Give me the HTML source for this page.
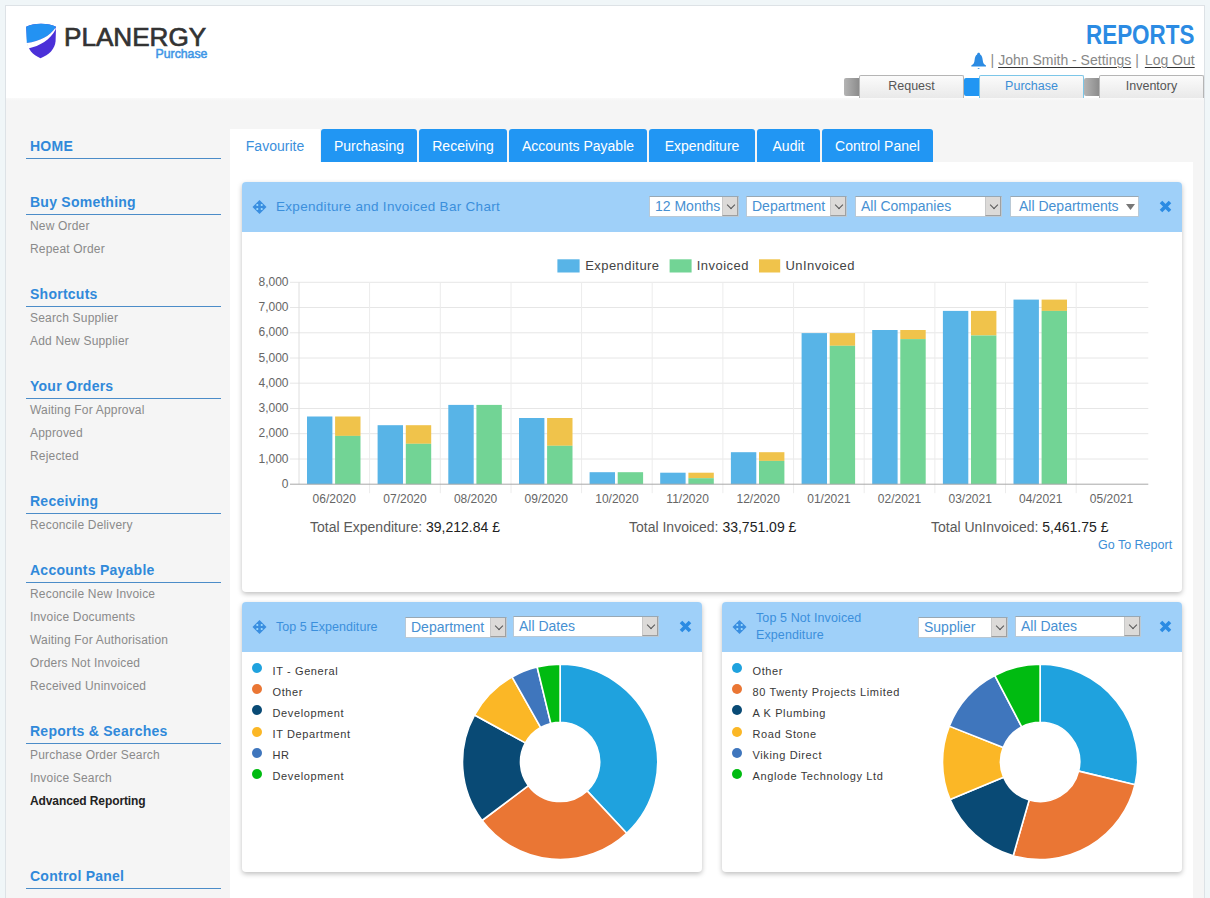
<!DOCTYPE html>
<html><head><meta charset="utf-8">
<style>
*{margin:0;padding:0;box-sizing:border-box}
html,body{width:1210px;height:898px;overflow:hidden;background:#f0f6f8;font-family:"Liberation Sans",sans-serif}
.abs{position:absolute}
#frame{position:absolute;left:5px;top:5px;width:1200px;height:900px;border:1px solid #dde2e6;background:#f5f5f5}
#hdr{position:absolute;left:6px;top:6px;width:1198px;height:93px;background:#fff;border-bottom:1px solid #e2e2e2}
#hdr:after{content:"";position:absolute;left:0;right:0;top:92px;height:3px;background:linear-gradient(#f9f9f9,#f5f5f5)}
.side-h{position:absolute;left:26px;width:195px;border-bottom:1px solid #4b8cc8;color:#3089da;font-weight:bold;font-size:14px;letter-spacing:0.25px;padding-left:4px;padding-top:0.5px}
.side-i{position:absolute;left:30px;font-size:12px;color:#8a8a8a;letter-spacing:0.18px;white-space:nowrap}
#panel{position:absolute;left:230px;top:162px;width:963px;height:740px;background:#fff}
.tab{position:absolute;top:129px;height:33px;background:#2196f3;color:#fff;border-radius:3px 3px 0 0;font-size:14px;text-align:center;line-height:34px;white-space:nowrap}
.wid{position:absolute;background:#fff;border-radius:4px;box-shadow:0 2px 5px rgba(0,0,0,0.25)}
.wh{position:absolute;left:0;top:0;right:0;height:50px;background:#9fd0f9;border-radius:4px 4px 0 0}
.wt{position:absolute;color:#3b8fdc;font-size:13.5px;letter-spacing:0.3px;white-space:nowrap}
.sel{position:absolute;height:21px;background:#fff;border:1px solid #b9c9d6;border-top-color:#98a8b4;color:#4690d2;font-size:14px;line-height:19px;padding-left:5px;white-space:nowrap;overflow:hidden}
.sel .arr{position:absolute;right:0;top:0;width:16px;height:19px;background:#dcdad8;border-left:1px solid #c8c8c8;border-right:1px solid #a0a0a0;border-bottom:1px solid #a0a0a0}
.sel .arr:after{content:"";position:absolute;left:4.5px;top:5px;width:5px;height:5px;border-right:1.5px solid #555;border-bottom:1.5px solid #555;transform:rotate(45deg)}
.tot{position:absolute;font-size:14px;color:#5a5a5a;white-space:nowrap}
.tot b{font-weight:normal;color:#222}
.lgi{position:absolute;left:0;font-size:11px;color:#383838;letter-spacing:0.62px;white-space:nowrap}
.dot{position:absolute;width:10px;height:10px;border-radius:50%}
.hbtn{position:absolute;top:75px;width:105px;height:23px;border:1px solid #b5b5b5;border-bottom:none;border-radius:2px 2px 0 0;background:linear-gradient(#fbfbfb,#e9e9e9);color:#555;font-size:12.5px;text-align:center;line-height:21px}
.mark{position:absolute;top:78px;width:15px;height:18px;border-radius:2px 0 0 2px}
svg text{font-family:"Liberation Sans",sans-serif}
.ax{font-size:12px;fill:#666}
.lg{font-size:13px;fill:#444;letter-spacing:0.45px}
</style></head><body>
<div id="frame"></div>
<div id="hdr"></div>

<!-- logo -->
<svg class="abs" style="left:24px;top:21px" width="36" height="40" viewBox="0 0 36 40">
  <path d="M2.2,5.8 C9,1.6 25,1.6 32,5.8 L31.6,20 C31,28 25,34 16.5,37.2 C8.5,34 3.5,28 3,20 Z" fill="#4b30d8"/>
  <path d="M2.2,5.8 C9,1.6 25,1.6 32,5.8 L31.6,6.6 C26,15 16,20.5 2.8,22 Z" fill="#2392f2"/>
  <path d="M2.8,22 C16,20.5 26,15 31.6,6.6 L31.6,8.6 C26,19 16,25 4.3,27.6 C3.6,26 3.1,24 2.9,22 Z" fill="#ffffff"/>
</svg>
<div class="abs" style="left:64px;top:22px;font-size:26.5px;color:#333;line-height:30px;transform:scaleX(0.985);transform-origin:left top;-webkit-text-stroke:0.7px #333;color:#333">PLANERGY</div>
<div class="abs" style="left:155.5px;top:47px;font-size:12.3px;color:#3d96e6;line-height:14px;-webkit-text-stroke:0.5px #3d96e6">Purchase</div>

<!-- right header -->
<div class="abs" style="left:1086px;top:19px;font-size:27px;font-weight:bold;color:#2b8be3;line-height:32px;transform:scaleX(0.83);transform-origin:left top">REPORTS</div>
<svg class="abs" style="left:971px;top:52px" width="16" height="18" viewBox="0 0 16 18">
 <path d="M7.6,0.8 C6.8,0.8 6.2,1.5 6.1,2.4 C4.6,3 3.9,5 3.6,8 C3.3,11 2.6,12.3 0.3,13.6 L0.3,14.6 L15,14.6 L15,13.6 C12.7,12.3 12,11 11.7,8 C11.4,5 10.7,3 9.2,2.4 C9.1,1.5 8.5,0.8 7.6,0.8 Z" fill="#2b8be3"/>
 <path d="M6.3,16 L7.6,17 L9,16 Z" fill="#2b8be3"/>
</svg>
<div class="abs" style="left:990.5px;top:52px;font-size:14px;color:#888;line-height:16px;white-space:nowrap">|<span style="text-decoration:underline;text-decoration-color:#333;text-underline-offset:1.5px;margin-left:4px">John Smith - Settings</span><span style="margin-left:4px">|</span><span style="text-decoration:underline;text-decoration-color:#333;text-underline-offset:1.5px;margin-left:6px">Log Out</span></div>
<div class="mark" style="left:844px;background:linear-gradient(to right,#b4b4b4,#8c8c8c)"></div>
<div class="hbtn" style="left:859px">Request</div>
<div class="mark" style="left:964px;background:#2196f3"></div>
<div class="hbtn" style="left:979px;border-color:#7cc6e8;color:#3c8ed6">Purchase</div>
<div class="mark" style="left:1084px;background:linear-gradient(to right,#b4b4b4,#8c8c8c)"></div>
<div class="hbtn" style="left:1099px">Inventory</div>

<!-- sidebar -->
<div class="side-h" style="top:137px;height:22px;line-height:16px">HOME</div>
<div class="side-h" style="top:193px;height:22px;line-height:16px">Buy Something</div>
<div class="side-i" style="top:219px;line-height:14px">New Order</div>
<div class="side-i" style="top:242px;line-height:14px">Repeat Order</div>
<div class="side-h" style="top:285px;height:22px;line-height:16px">Shortcuts</div>
<div class="side-i" style="top:311px;line-height:14px">Search Supplier</div>
<div class="side-i" style="top:334px;line-height:14px">Add New Supplier</div>
<div class="side-h" style="top:377px;height:22px;line-height:16px">Your Orders</div>
<div class="side-i" style="top:403px;line-height:14px">Waiting For Approval</div>
<div class="side-i" style="top:426px;line-height:14px">Approved</div>
<div class="side-i" style="top:449px;line-height:14px">Rejected</div>
<div class="side-h" style="top:492px;height:22px;line-height:16px">Receiving</div>
<div class="side-i" style="top:518px;line-height:14px">Reconcile Delivery</div>
<div class="side-h" style="top:561px;height:22px;line-height:16px">Accounts Payable</div>
<div class="side-i" style="top:587px;line-height:14px">Reconcile New Invoice</div>
<div class="side-i" style="top:610px;line-height:14px">Invoice Documents</div>
<div class="side-i" style="top:633px;line-height:14px">Waiting For Authorisation</div>
<div class="side-i" style="top:656px;line-height:14px">Orders Not Invoiced</div>
<div class="side-i" style="top:679px;line-height:14px">Received Uninvoiced</div>
<div class="side-h" style="top:722px;height:22px;line-height:16px">Reports &amp; Searches</div>
<div class="side-i" style="top:748px;line-height:14px">Purchase Order Search</div>
<div class="side-i" style="top:771px;line-height:14px">Invoice Search</div>
<div class="side-i" style="top:794px;line-height:14px;color:#222;font-weight:bold;letter-spacing:-0.1px">Advanced Reporting</div>
<div class="side-h" style="top:867px;height:22px;line-height:16px">Control Panel</div>

<!-- main -->
<div id="panel"></div>
<div class="tab" style="left:230px;width:90px;background:#fff;color:#3b8fdc;border-radius:0">Favourite</div>
<div class="tab" style="left:321px;width:96px">Purchasing</div>
<div class="tab" style="left:419px;width:88px">Receiving</div>
<div class="tab" style="left:509px;width:138px">Accounts Payable</div>
<div class="tab" style="left:649px;width:106px">Expenditure</div>
<div class="tab" style="left:757px;width:63px">Audit</div>
<div class="tab" style="left:822px;width:111px">Control Panel</div>

<!-- chart widget -->
<div class="wid" style="left:242px;top:182px;width:940px;height:410px">
  <div class="wh"></div>
</div>
<div class="wid" style="left:242px;top:602px;width:460px;height:270px"><div class="wh"></div></div>
<div class="wid" style="left:722px;top:602px;width:460px;height:270px"><div class="wh"></div></div>

<!-- big widget header -->
<svg class="abs" style="left:252px;top:200px" width="15" height="14" viewBox="0 0 15 14"><path d="M7.5,0 L14.5,7 L7.5,14 L0.5,7 Z" fill="#3a8ee0"/><circle cx="5.3" cy="5" r="1.1" fill="#9fdcff"/><circle cx="9.7" cy="5" r="1.1" fill="#9fdcff"/><circle cx="5.3" cy="9" r="1.1" fill="#9fdcff"/><circle cx="9.7" cy="9" r="1.1" fill="#9fdcff"/></svg>
<div class="wt" style="left:276px;top:199px;line-height:16px">Expenditure and Invoiced Bar Chart</div>
<div class="sel" style="left:649px;top:196px;width:90px">12 Months<div class="arr"></div></div>
<div class="sel" style="left:746px;top:196px;width:101px">Department<div class="arr"></div></div>
<div class="sel" style="left:855px;top:196px;width:147px">All Companies<div class="arr"></div></div>
<div class="sel" style="left:1010px;top:196px;width:129px;padding-left:8px">All Departments<svg class="abs" style="left:115px;top:7px" width="9" height="6" viewBox="0 0 9 6"><path d="M0,0 L9,0 L4.5,6 Z" fill="#777"/></svg></div>
<svg class="abs" style="left:1159px;top:200px" width="13" height="13" viewBox="0 0 13 13"><path d="M2,2 L11,11 M11,2 L2,11" stroke="#2b8be3" stroke-width="3.6"/></svg>

<div class="tot" style="left:310px;top:519px;line-height:16px">Total Expenditure: <b>39,212.84 £</b></div>
<div class="tot" style="left:629px;top:519px;line-height:16px">Total Invoiced: <b>33,751.09 £</b></div>
<div class="tot" style="left:931px;top:519px;line-height:16px">Total UnInvoiced: <b>5,461.75 £</b></div>
<div class="abs" style="left:1098px;top:538px;font-size:12.5px;color:#3c8ed6;line-height:14px">Go To Report</div>

<!-- left small widget -->
<svg class="abs" style="left:252px;top:620px" width="15" height="14" viewBox="0 0 15 14"><path d="M7.5,0 L14.5,7 L7.5,14 L0.5,7 Z" fill="#3a8ee0"/><circle cx="5.3" cy="5" r="1.1" fill="#9fdcff"/><circle cx="9.7" cy="5" r="1.1" fill="#9fdcff"/><circle cx="5.3" cy="9" r="1.1" fill="#9fdcff"/><circle cx="9.7" cy="9" r="1.1" fill="#9fdcff"/></svg>
<div class="wt" style="left:276px;top:619px;line-height:16px;font-size:12.5px;letter-spacing:0.05px">Top 5 Expenditure</div>
<div class="sel" style="left:405px;top:617px;width:102px">Department<div class="arr"></div></div>
<div class="sel" style="left:513px;top:616px;width:146px">All Dates<div class="arr"></div></div>
<svg class="abs" style="left:679px;top:620px" width="13" height="13" viewBox="0 0 13 13"><path d="M2,2 L11,11 M11,2 L2,11" stroke="#2b8be3" stroke-width="3.6"/></svg>

<div class="abs" style="left:252px;top:663px">
</div>
<div class="dot" style="left:252px;top:663.0px;background:#1fa2de"></div>
<div class="lgi" style="left:272.5px;top:662.0px;line-height:13px;padding-top:2.5px">IT - General</div>
<div class="dot" style="left:252px;top:684.1px;background:#ea7634"></div>
<div class="lgi" style="left:272.5px;top:683.1px;line-height:13px;padding-top:2.5px">Other</div>
<div class="dot" style="left:252px;top:705.3px;background:#094a75"></div>
<div class="lgi" style="left:272.5px;top:704.3px;line-height:13px;padding-top:2.5px">Development</div>
<div class="dot" style="left:252px;top:726.5px;background:#fbb726"></div>
<div class="lgi" style="left:272.5px;top:725.5px;line-height:13px;padding-top:2.5px">IT Department</div>
<div class="dot" style="left:252px;top:747.6px;background:#3f76bd"></div>
<div class="lgi" style="left:272.5px;top:746.6px;line-height:13px;padding-top:2.5px">HR</div>
<div class="dot" style="left:252px;top:768.8px;background:#00bb11"></div>
<div class="lgi" style="left:272.5px;top:767.8px;line-height:13px;padding-top:2.5px">Development</div>

<!-- right small widget -->
<svg class="abs" style="left:732px;top:620px" width="15" height="14" viewBox="0 0 15 14"><path d="M7.5,0 L14.5,7 L7.5,14 L0.5,7 Z" fill="#3a8ee0"/><circle cx="5.3" cy="5" r="1.1" fill="#9fdcff"/><circle cx="9.7" cy="5" r="1.1" fill="#9fdcff"/><circle cx="5.3" cy="9" r="1.1" fill="#9fdcff"/><circle cx="9.7" cy="9" r="1.1" fill="#9fdcff"/></svg>
<div class="wt" style="left:756px;top:610px;line-height:16.5px;font-size:12.5px;letter-spacing:0.1px">Top 5 Not Invoiced<br>Expenditure</div>
<div class="sel" style="left:918px;top:617px;width:90px">Supplier<div class="arr"></div></div>
<div class="sel" style="left:1015px;top:616px;width:126px">All Dates<div class="arr"></div></div>
<svg class="abs" style="left:1159px;top:620px" width="13" height="13" viewBox="0 0 13 13"><path d="M2,2 L11,11 M11,2 L2,11" stroke="#2b8be3" stroke-width="3.6"/></svg>
<div class="dot" style="left:732px;top:663.0px;background:#1fa2de"></div>
<div class="lgi" style="left:752.5px;top:662.0px;line-height:13px;padding-top:2.5px">Other</div>
<div class="dot" style="left:732px;top:684.1px;background:#ea7634"></div>
<div class="lgi" style="left:752.5px;top:683.1px;line-height:13px;padding-top:2.5px">80 Twenty Projects Limited</div>
<div class="dot" style="left:732px;top:705.3px;background:#094a75"></div>
<div class="lgi" style="left:752.5px;top:704.3px;line-height:13px;padding-top:2.5px">A K Plumbing</div>
<div class="dot" style="left:732px;top:726.5px;background:#fbb726"></div>
<div class="lgi" style="left:752.5px;top:725.5px;line-height:13px;padding-top:2.5px">Road Stone</div>
<div class="dot" style="left:732px;top:747.6px;background:#3f76bd"></div>
<div class="lgi" style="left:752.5px;top:746.6px;line-height:13px;padding-top:2.5px">Viking Direct</div>
<div class="dot" style="left:732px;top:768.8px;background:#00bb11"></div>
<div class="lgi" style="left:752.5px;top:767.8px;line-height:13px;padding-top:2.5px">Anglode Technology Ltd</div>


<svg class="abs" style="left:0;top:0" width="1210" height="898" viewBox="0 0 1210 898">
<line x1="290" y1="459.0" x2="1148.3" y2="459.0" stroke="#e6e6e6" stroke-width="1"/>
<text x="288.5" y="462.5" text-anchor="end" class="ax">1,000</text>
<line x1="290" y1="433.7" x2="1148.3" y2="433.7" stroke="#e6e6e6" stroke-width="1"/>
<text x="288.5" y="437.2" text-anchor="end" class="ax">2,000</text>
<line x1="290" y1="408.5" x2="1148.3" y2="408.5" stroke="#e6e6e6" stroke-width="1"/>
<text x="288.5" y="412.0" text-anchor="end" class="ax">3,000</text>
<line x1="290" y1="383.2" x2="1148.3" y2="383.2" stroke="#e6e6e6" stroke-width="1"/>
<text x="288.5" y="386.7" text-anchor="end" class="ax">4,000</text>
<line x1="290" y1="358.0" x2="1148.3" y2="358.0" stroke="#e6e6e6" stroke-width="1"/>
<text x="288.5" y="361.5" text-anchor="end" class="ax">5,000</text>
<line x1="290" y1="332.8" x2="1148.3" y2="332.8" stroke="#e6e6e6" stroke-width="1"/>
<text x="288.5" y="336.3" text-anchor="end" class="ax">6,000</text>
<line x1="290" y1="307.5" x2="1148.3" y2="307.5" stroke="#e6e6e6" stroke-width="1"/>
<text x="288.5" y="311.0" text-anchor="end" class="ax">7,000</text>
<line x1="290" y1="282.3" x2="1148.3" y2="282.3" stroke="#e6e6e6" stroke-width="1"/>
<text x="288.5" y="285.8" text-anchor="end" class="ax">8,000</text>
<text x="288.5" y="487.7" text-anchor="end" class="ax">0</text>
<line x1="369.6" y1="282.3" x2="369.6" y2="493.2" stroke="#ececec" stroke-width="1"/>
<line x1="440.3" y1="282.3" x2="440.3" y2="493.2" stroke="#ececec" stroke-width="1"/>
<line x1="511.0" y1="282.3" x2="511.0" y2="493.2" stroke="#ececec" stroke-width="1"/>
<line x1="581.6" y1="282.3" x2="581.6" y2="493.2" stroke="#ececec" stroke-width="1"/>
<line x1="652.2" y1="282.3" x2="652.2" y2="493.2" stroke="#ececec" stroke-width="1"/>
<line x1="722.9" y1="282.3" x2="722.9" y2="493.2" stroke="#ececec" stroke-width="1"/>
<line x1="793.6" y1="282.3" x2="793.6" y2="493.2" stroke="#ececec" stroke-width="1"/>
<line x1="864.2" y1="282.3" x2="864.2" y2="493.2" stroke="#ececec" stroke-width="1"/>
<line x1="934.9" y1="282.3" x2="934.9" y2="493.2" stroke="#ececec" stroke-width="1"/>
<line x1="1005.5" y1="282.3" x2="1005.5" y2="493.2" stroke="#ececec" stroke-width="1"/>
<line x1="1076.2" y1="282.3" x2="1076.2" y2="493.2" stroke="#ececec" stroke-width="1"/>
<line x1="299.0" y1="282.3" x2="299.0" y2="484.2" stroke="#dedede" stroke-width="1"/>
<rect x="307.0" y="416.5" width="25.4" height="67.7" fill="#58b4e7"/>
<rect x="335.1" y="416.5" width="25.4" height="19.4" fill="#f0c34b"/>
<rect x="335.1" y="435.9" width="25.4" height="48.3" fill="#72d495"/>
<text x="334.3" y="502.8" text-anchor="middle" class="ax">06/2020</text>
<rect x="377.6" y="425.2" width="25.4" height="59.0" fill="#58b4e7"/>
<rect x="405.8" y="425.2" width="25.4" height="18.6" fill="#f0c34b"/>
<rect x="405.8" y="443.8" width="25.4" height="40.4" fill="#72d495"/>
<text x="405.0" y="502.8" text-anchor="middle" class="ax">07/2020</text>
<rect x="448.3" y="404.9" width="25.4" height="79.3" fill="#58b4e7"/>
<rect x="476.4" y="404.9" width="25.4" height="0.0" fill="#f0c34b"/>
<rect x="476.4" y="404.9" width="25.4" height="79.3" fill="#72d495"/>
<text x="475.6" y="502.8" text-anchor="middle" class="ax">08/2020</text>
<rect x="519.0" y="418.0" width="25.4" height="66.2" fill="#58b4e7"/>
<rect x="547.1" y="418.0" width="25.4" height="27.8" fill="#f0c34b"/>
<rect x="547.1" y="445.8" width="25.4" height="38.4" fill="#72d495"/>
<text x="546.3" y="502.8" text-anchor="middle" class="ax">09/2020</text>
<rect x="589.6" y="472.2" width="25.4" height="12.0" fill="#58b4e7"/>
<rect x="617.7" y="472.2" width="25.4" height="0.0" fill="#f0c34b"/>
<rect x="617.7" y="472.2" width="25.4" height="12.0" fill="#72d495"/>
<text x="616.9" y="502.8" text-anchor="middle" class="ax">10/2020</text>
<rect x="660.2" y="472.7" width="25.4" height="11.5" fill="#58b4e7"/>
<rect x="688.4" y="472.7" width="25.4" height="5.5" fill="#f0c34b"/>
<rect x="688.4" y="478.2" width="25.4" height="6.0" fill="#72d495"/>
<text x="687.6" y="502.8" text-anchor="middle" class="ax">11/2020</text>
<rect x="730.9" y="452.2" width="25.4" height="32.0" fill="#58b4e7"/>
<rect x="759.0" y="452.2" width="25.4" height="8.7" fill="#f0c34b"/>
<rect x="759.0" y="460.9" width="25.4" height="23.3" fill="#72d495"/>
<text x="758.2" y="502.8" text-anchor="middle" class="ax">12/2020</text>
<rect x="801.6" y="333.1" width="25.4" height="151.1" fill="#58b4e7"/>
<rect x="829.7" y="333.1" width="25.4" height="12.7" fill="#f0c34b"/>
<rect x="829.7" y="345.8" width="25.4" height="138.4" fill="#72d495"/>
<text x="828.9" y="502.8" text-anchor="middle" class="ax">01/2021</text>
<rect x="872.2" y="330.0" width="25.4" height="154.2" fill="#58b4e7"/>
<rect x="900.3" y="330.0" width="25.4" height="9.1" fill="#f0c34b"/>
<rect x="900.3" y="339.1" width="25.4" height="145.1" fill="#72d495"/>
<text x="899.5" y="502.8" text-anchor="middle" class="ax">02/2021</text>
<rect x="942.9" y="310.9" width="25.4" height="173.3" fill="#58b4e7"/>
<rect x="971.0" y="310.9" width="25.4" height="24.6" fill="#f0c34b"/>
<rect x="971.0" y="335.5" width="25.4" height="148.7" fill="#72d495"/>
<text x="970.2" y="502.8" text-anchor="middle" class="ax">03/2021</text>
<rect x="1013.5" y="299.6" width="25.4" height="184.6" fill="#58b4e7"/>
<rect x="1041.6" y="299.6" width="25.4" height="11.3" fill="#f0c34b"/>
<rect x="1041.6" y="310.9" width="25.4" height="173.3" fill="#72d495"/>
<text x="1040.8" y="502.8" text-anchor="middle" class="ax">04/2021</text>
<text x="1111.5" y="502.8" text-anchor="middle" class="ax">05/2021</text>
<line x1="290" y1="484.2" x2="1148.3" y2="484.2" stroke="#a9a9a9" stroke-width="1"/>
<rect x="557.4" y="259.3" width="22.2" height="13.2" fill="#58b4e7"/>
<rect x="669.6" y="259.3" width="22" height="13.2" fill="#72d495"/>
<rect x="759" y="259.3" width="21.2" height="13.2" fill="#f0c34b"/>
<text x="585.2" y="270" class="lg">Expenditure</text>
<text x="696.8" y="270" class="lg">Invoiced</text>
<text x="785.4" y="270" class="lg">UnInvoiced</text>
<path d="M560.10,664.30 A97.6,97.6 0 0 1 626.66,833.28 L587.11,790.86 A39.6,39.6 0 0 0 560.10,722.30 Z" fill="#1fa2de" stroke="#fff" stroke-width="1.6" stroke-linejoin="bevel"/>
<path d="M626.66,833.28 A97.6,97.6 0 0 1 482.05,820.50 L528.43,785.68 A39.6,39.6 0 0 0 587.11,790.86 Z" fill="#ea7634" stroke="#fff" stroke-width="1.6" stroke-linejoin="bevel"/>
<path d="M482.05,820.50 A97.6,97.6 0 0 1 474.49,715.03 L525.37,742.88 A39.6,39.6 0 0 0 528.43,785.68 Z" fill="#094a75" stroke="#fff" stroke-width="1.6" stroke-linejoin="bevel"/>
<path d="M474.49,715.03 A97.6,97.6 0 0 1 512.04,676.95 L540.60,727.43 A39.6,39.6 0 0 0 525.37,742.88 Z" fill="#fbb726" stroke="#fff" stroke-width="1.6" stroke-linejoin="bevel"/>
<path d="M512.04,676.95 A97.6,97.6 0 0 1 537.15,667.04 L550.79,723.41 A39.6,39.6 0 0 0 540.60,727.43 Z" fill="#3f76bd" stroke="#fff" stroke-width="1.6" stroke-linejoin="bevel"/>
<path d="M537.15,667.04 A97.6,97.6 0 0 1 560.10,664.30 L560.10,722.30 A39.6,39.6 0 0 0 550.79,723.41 Z" fill="#00bb11" stroke="#fff" stroke-width="1.6" stroke-linejoin="bevel"/>
<path d="M1040.10,664.30 A97.6,97.6 0 0 1 1135.00,784.68 L1078.61,771.14 A39.6,39.6 0 0 0 1040.10,722.30 Z" fill="#1fa2de" stroke="#fff" stroke-width="1.6" stroke-linejoin="bevel"/>
<path d="M1135.00,784.68 A97.6,97.6 0 0 1 1013.20,855.72 L1029.18,799.97 A39.6,39.6 0 0 0 1078.61,771.14 Z" fill="#ea7634" stroke="#fff" stroke-width="1.6" stroke-linejoin="bevel"/>
<path d="M1013.20,855.72 A97.6,97.6 0 0 1 950.06,799.56 L1003.57,777.18 A39.6,39.6 0 0 0 1029.18,799.97 Z" fill="#094a75" stroke="#fff" stroke-width="1.6" stroke-linejoin="bevel"/>
<path d="M950.06,799.56 A97.6,97.6 0 0 1 949.29,726.13 L1003.26,747.39 A39.6,39.6 0 0 0 1003.57,777.18 Z" fill="#fbb726" stroke="#fff" stroke-width="1.6" stroke-linejoin="bevel"/>
<path d="M949.29,726.13 A97.6,97.6 0 0 1 994.73,675.49 L1021.69,726.84 A39.6,39.6 0 0 0 1003.26,747.39 Z" fill="#3f76bd" stroke="#fff" stroke-width="1.6" stroke-linejoin="bevel"/>
<path d="M994.73,675.49 A97.6,97.6 0 0 1 1040.10,664.30 L1040.10,722.30 A39.6,39.6 0 0 0 1021.69,726.84 Z" fill="#00bb11" stroke="#fff" stroke-width="1.6" stroke-linejoin="bevel"/>
</svg>
</body></html>
